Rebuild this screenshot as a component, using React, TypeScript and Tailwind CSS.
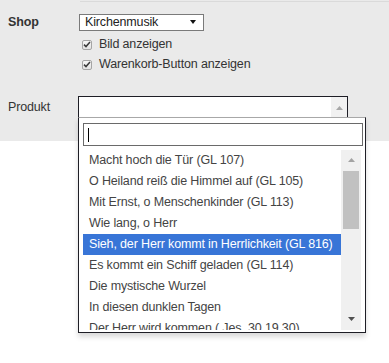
import React from "react";

const items = [
  "Macht hoch die Tür (GL 107)",
  "O Heiland reiß die Himmel auf (GL 105)",
  "Mit Ernst, o Menschenkinder (GL 113)",
  "Wie lang, o Herr",
  "Sieh, der Herr kommt in Herrlichkeit (GL 816)",
  "Es kommt ein Schiff geladen (GL 114)",
  "Die mystische Wurzel",
  "In diesen dunklen Tagen",
  "Der Herr wird kommen ( Jes. 30,19.30)",
];

function Check({ label }: { label: string }) {
  return (
    <div className="flex h-[20px] items-center">
      <span className="flex h-[10px] w-[10px] items-center justify-center rounded-[2px] border border-[#a5a5a5] bg-gradient-to-b from-[#f6f6f6] to-[#e2e2e2]">
        <svg width="8" height="7" viewBox="0 0 8 7">
          <path d="M1 3.6 L3 5.6 L7 1" fill="none" stroke="#3a3a3a" strokeWidth="1.5" />
        </svg>
      </span>
      <span className="ml-[7px] text-[12.5px] tracking-[-0.15px] text-[#333]">{label}</span>
    </div>
  );
}

export default function App() {
  return (
    <div
      className="h-[363px] w-[389px] overflow-hidden bg-white"
      style={{ fontFamily: '"Liberation Sans", Arial, sans-serif' }}
    >
      <div className="relative h-[141px] bg-[#eaeaea]">
        <div className="h-[1px]" />
        <div className="ml-[80px] h-[1px] bg-[#dadada]" />
        <div className="mt-[11px] flex items-center">
          <div className="w-[79px] pl-[8px] text-[12.5px] font-bold tracking-[-0.15px] text-[#333]">Shop</div>
          <div className="flex h-[17px] w-[125px] items-center justify-between border border-[#7a7a7a] bg-white pl-[5px] pr-[7px]">
            <span className="text-[12.5px] leading-[15px] tracking-[-0.15px] text-[#222]">Kirchenmusik</span>
            <svg width="6" height="4" viewBox="0 0 6 4">
              <path d="M0 0 L6 0 L3 4 Z" fill="#111" />
            </svg>
          </div>
        </div>
        <div className="ml-[82px] mt-[3px] flex flex-col">
          <Check label="Bild anzeigen" />
          <Check label="Warenkorb-Button anzeigen" />
        </div>
        <div className="mt-[21px] flex items-start">
          <div className="flex h-[24px] w-[78px] items-center pl-[8px] text-[12.5px] tracking-[-0.15px] text-[#333]">Produkt</div>
          <div className="flex h-[24px] w-[270px] justify-end border border-[#1e1e26] bg-white">
            <div className="flex w-[16px] items-center justify-center bg-[#f1f1f1]">
              <svg width="7" height="4" viewBox="0 0 7 4">
                <path d="M0 4 L7 4 L3.5 0 Z" fill="#a8a8a8" />
              </svg>
            </div>
          </div>
        </div>

        <div className="absolute left-[78px] top-[117px] z-10 flex h-[216px] w-[288px] flex-col border border-[#1e1e26] border-t-[#a8a8a8] bg-white px-[4px] pb-[2px] pt-[5px] shadow-[0_4px_5px_rgba(0,0,0,0.15)]">
          <div className="flex h-[23px] w-[280px] items-center border border-[#6a6a6a] bg-white pl-[4px]">
            <span className="h-[14px] w-[1px] bg-black" />
          </div>
          <div className="mt-[4px] flex h-[180px] w-[278px] overflow-hidden">
            <div className="flex w-[258px] flex-col">
              {items.map((t, i) => (
                <div
                  key={t}
                  className={
                    i === 4
                      ? "h-[21px] shrink-0 whitespace-nowrap bg-[#3875d7] pl-[6px] text-[12.5px] leading-[21px] tracking-[-0.15px] text-white"
                      : "h-[21px] shrink-0 whitespace-nowrap pl-[6px] text-[12.5px] leading-[21px] tracking-[-0.15px] text-[#444]"
                  }
                >
                  {t}
                </div>
              ))}
            </div>
            <div className="flex w-[20px] flex-col items-center bg-[#f0f0f0]">
              <div className="flex h-[20px] items-center justify-center">
                <svg width="7" height="4" viewBox="0 0 7 4">
                  <path d="M0 4 L7 4 L3.5 0 Z" fill="#a3a3a3" />
                </svg>
              </div>
              <div className="mt-[1px] h-[58px] w-[16px] bg-[#c1c1c1]" />
              <div className="flex-1" />
              <div className="flex h-[20px] items-center justify-center pb-[2px]">
                <svg width="7" height="4" viewBox="0 0 7 4">
                  <path d="M0 0 L7 0 L3.5 4 Z" fill="#505050" />
                </svg>
              </div>
            </div>
          </div>
        </div>
      </div>
    </div>
  );
}
